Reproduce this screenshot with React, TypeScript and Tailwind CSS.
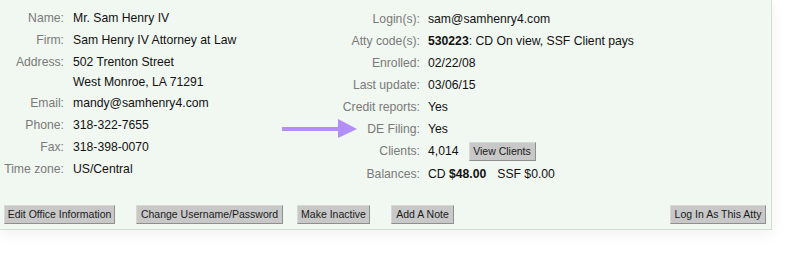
const leftRows: { label: string; lines: React.ReactNode[] }[] = [
  { label: "Name:", lines: ["Mr. Sam Henry IV"] },
  { label: "Firm:", lines: ["Sam Henry IV Attorney at Law"] },
  { label: "Address:", lines: ["502 Trenton Street", "West Monroe, LA 71291"] },
  { label: "Email:", lines: ["mandy@samhenry4.com"] },
  { label: "Phone:", lines: ["318-322-7655"] },
  { label: "Fax:", lines: ["318-398-0070"] },
  { label: "Time zone:", lines: ["US/Central"] },
];

function Btn({ children, className = "" }: { children: React.ReactNode; className?: string }) {
  return (
    <button
      className={`h-[19px] bg-[#c8c8c8] border border-[#d8d8d8] border-r-[#8f8f8f] border-b-[#8f8f8f] text-[10.5px] leading-none text-[#1a1a1a] px-0 whitespace-nowrap flex items-center justify-center ${className}`}
    >
      {children}
    </button>
  );
}

function Arrow() {
  return (
    <svg width="76" height="20" viewBox="0 0 76 20" className="absolute left-[282px] top-[119px]">
      <rect x="0" y="8" width="58" height="4" fill="#b28ef6" />
      <polygon points="56,0 75,10 56,19" fill="#b28ef6" />
    </svg>
  );
}

function RightRow({ label, children }: { label: string; children: React.ReactNode }) {
  return (
    <div className="flex items-center min-h-[22px]">
      <div className="w-[121px] text-right text-[#7a7a7a]">{label}</div>
      <div className="pl-[8px] text-[#111]">{children}</div>
    </div>
  );
}

export default function App() {
  return (
    <div
      className="relative w-[800px] h-[264px] bg-white overflow-hidden"
      style={{ fontFamily: '"Liberation Sans", Arial, sans-serif' }}
    >
      <div className="w-[772px] h-[230px] bg-[#f1f7f1] border-r border-b border-[#d6dcd6] shadow-[0_4px_14px_rgba(0,0,0,0.06)] flex flex-col text-[12.2px]">
        <div className="flex pt-[8px]">
          <div className="w-[299px] flex flex-col">
            {leftRows.map((r) => (
              <div key={r.label} className="flex mb-[1.75px]">
                <div className="w-[64px] text-right text-[#7a7a7a] leading-[20px]">{r.label}</div>
                <div className="pl-[9px] text-[#111] leading-[20px]">
                  {r.lines.map((l, i) => (
                    <div key={i}>{l}</div>
                  ))}
                </div>
              </div>
            ))}
          </div>
          <div className="flex flex-col">
            <RightRow label="Login(s):">sam@samhenry4.com</RightRow>
            <RightRow label="Atty code(s):">
              <b>530223</b>: CD On view, SSF Client pays
            </RightRow>
            <RightRow label="Enrolled:">02/22/08</RightRow>
            <RightRow label="Last update:">03/06/15</RightRow>
            <RightRow label="Credit reports:">Yes</RightRow>
            <RightRow label="DE Filing:">Yes</RightRow>
            <div className="flex items-center h-[23px]">
              <div className="w-[121px] text-right text-[#7a7a7a]">Clients:</div>
              <div className="pl-[8px] text-[#111] flex items-center">
                4,014
                <Btn className="ml-[10px] w-[67px]">View Clients</Btn>
              </div>
            </div>
            <RightRow label="Balances:">
              CD <b>$48.00</b>
              <span className="ml-[11px]">SSF $0.00</span>
            </RightRow>
          </div>
        </div>
        <div className="mt-auto flex items-center px-[4px] pb-[5px]">
          <Btn className="w-[111px]">Edit Office Information</Btn>
          <Btn className="ml-[21px] w-[147px]">Change Username/Password</Btn>
          <Btn className="ml-[14px] w-[73px]">Make Inactive</Btn>
          <Btn className="ml-[21px] w-[63px]">Add A Note</Btn>
          <Btn className="ml-auto w-[96px] mr-[1px]">Log In As This Atty</Btn>
        </div>
      </div>
      <Arrow />
    </div>
  );
}
